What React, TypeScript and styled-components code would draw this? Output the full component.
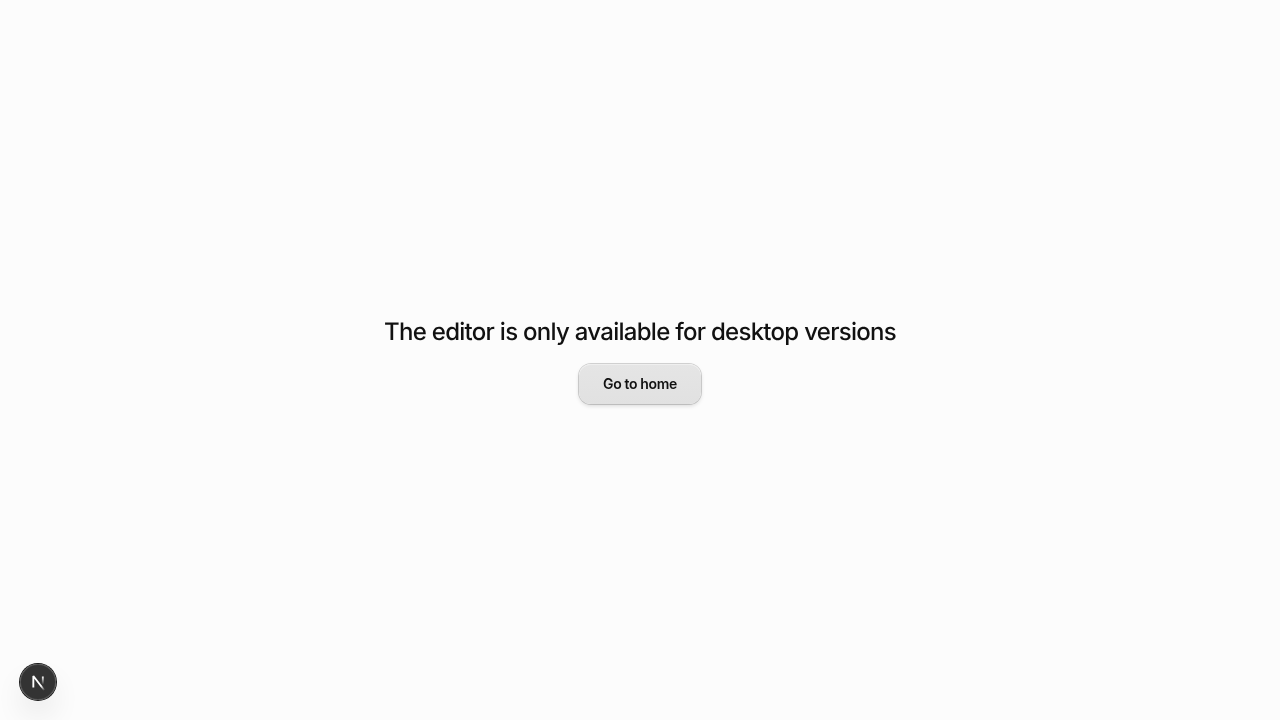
import React from 'react';
import styled, { createGlobalStyle } from 'styled-components';

const GlobalStyle = createGlobalStyle`
  *, *::before, *::after { box-sizing: border-box; }
  body {
    margin: 0;
    background: #fcfcfc;
    color: #111111;
    font-family: Inter, "Liberation Sans", sans-serif;
    -webkit-font-smoothing: antialiased;
  }
`;

const Page = styled.main`
  min-height: 100vh;
  display: flex;
  flex-direction: column;
  align-items: center;
  justify-content: center;
  gap: 16px;
  will-change: transform;
`;

const Title = styled.h1`
  margin: 0;
  font-size: 24px;
  line-height: 32px;
  font-weight: 500;
  letter-spacing: -0.03em;
  text-align: center;
  text-rendering: geometricPrecision;
`;

const HomeButton = styled.button`
  height: 40px;
  padding: 0 24px;
  border: 0;
  border-radius: 12px;
  background: linear-gradient(#e5e5e5, #e1e1e1);
  color: #111111;
  font-family: inherit;
  font-size: 14px;
  line-height: 20px;
  font-weight: 600;
  letter-spacing: -0.025em;
  cursor: pointer;
  box-shadow:
    0 0 0 1px rgba(0, 0, 0, 0.16),
    0 2px 4px rgba(0, 0, 0, 0.14),
    inset 0 1px 0 rgba(255, 255, 255, 0.4);
`;

const DevButton = styled.button`
  position: fixed;
  left: 20px;
  bottom: 20px;
  width: 36px;
  height: 36px;
  padding: 0;
  border: 0;
  border-radius: 50%;
  display: flex;
  align-items: center;
  justify-content: center;
  background: rgba(0, 0, 0, 0.8);
  cursor: pointer;
  box-shadow:
    0 0 0 1px #171717,
    inset 0 0 0 1px rgba(255, 255, 255, 0.14),
    0 16px 32px -8px rgba(0, 0, 0, 0.24);
`;

const Mark = styled.svg`
  flex: none;
`;

function NextMark() {
  return (
    <Mark width="40" height="40" viewBox="0 0 40 40" fill="none" aria-hidden="true">
      <g transform="translate(13 13)">
        <path d="M13.3 15.2 L2.34 1 V12.6" stroke="url(#diagonal)" strokeWidth="1.86" strokeLinejoin="bevel" />
        <path d="M11.825 1.5 V13.1" stroke="url(#stem)" strokeWidth="1.86" />
      </g>
      <defs>
        <linearGradient id="diagonal" x1="9.955" y1="11.133" x2="15.736" y2="18.3" gradientUnits="userSpaceOnUse">
          <stop stopColor="#fff" />
          <stop offset="0.605" stopColor="#fff" stopOpacity="0" />
          <stop offset="1" stopColor="#fff" stopOpacity="0" />
        </linearGradient>
        <linearGradient id="stem" x1="11.822" y1="1.4" x2="11.797" y2="9.625" gradientUnits="userSpaceOnUse">
          <stop stopColor="#fff" />
          <stop offset="1" stopColor="#fff" stopOpacity="0" />
        </linearGradient>
      </defs>
    </Mark>
  );
}

export default function App() {
  return (
    <>
      <GlobalStyle />
      <Page>
        <Title>The editor is only available for desktop versions</Title>
        <HomeButton type="button">Go to home</HomeButton>
      </Page>
      <DevButton type="button" aria-label="Open Next.js Dev Tools">
        <NextMark />
      </DevButton>
    </>
  );
}
